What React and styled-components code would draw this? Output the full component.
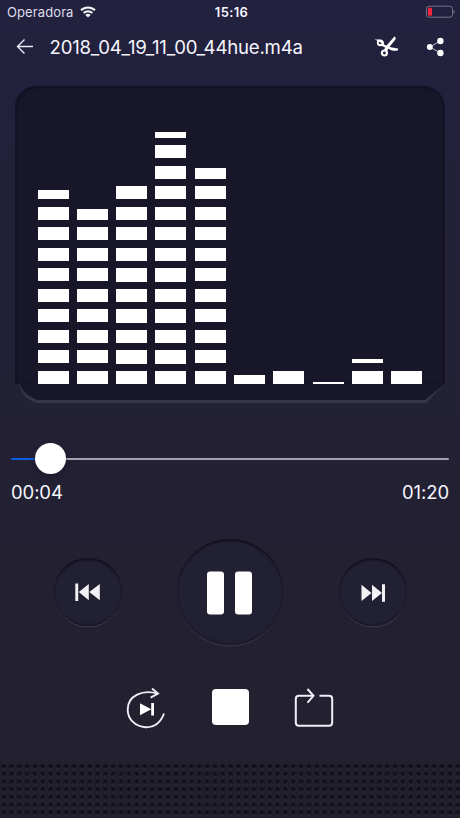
import styled, { createGlobalStyle } from "styled-components"

const GlobalStyle = createGlobalStyle`
    * {
        box-sizing: border-box;
    }
    body {
        margin: 0;
        background: #23202e;
    }
    button {
        border: none;
        padding: 0;
        background: none;
        color: inherit;
        cursor: pointer;
    }
    svg {
        display: block;
        overflow: visible;
    }
`;
const Screen = styled.div`
    display: flex;
    flex-direction: column;
    width: 460px;
    height: 818px;
    overflow: hidden;
    color: #f5f5fc;
    font-family: Inter, "Liberation Sans", sans-serif;
    background: linear-gradient(180deg, #22213f 0, #232139 200px, #232136 400px, #232031 600px, #23212e 818px);
`;
const StatusBar = styled.div`
    display: grid;
    grid-template-columns: 1fr auto 1fr;
    align-items: center;
    height: 24px;
    padding: 0 5px 0 7px;
    font-size: 13px;
`;
const Carrier = styled.div`
    display: flex;
    align-items: center;
    gap: 6px;
    letter-spacing: 0.1px;
    color: #dddcea;
`;
const Clock = styled.div`
    padding-left: 1px;
    font-weight: 600;
    letter-spacing: 0.35px;
`;
const BatterySlot = styled.div`
    display: flex;
    justify-content: flex-end;
`;
const Header = styled.div`
    display: flex;
    align-items: center;
    height: 46px;
    padding: 0 16px;
`;
const FileName = styled.div`
    flex: 1;
    margin-left: 15.5px;
    font-size: 18.6px;
    line-height: 24px;
    letter-spacing: -0.2px;
    white-space: nowrap;
`;
const HeaderIcons = styled.div`
    display: flex;
    align-items: center;
    gap: 28px;
`;
const Panel = styled.div`
    margin: 16px 15px 0;
`;
const PanelBody = styled.div`
    display: flex;
    align-items: flex-end;
    height: 298px;
    gap: 8.3px;
    padding: 0 22.5px;
    border-radius: 22px 22px 0 0;
    background: #181729;
    box-shadow: inset 0 2px 2px #131125, inset 2px 0 2px #151326, inset -2px 0 2px #151326, 1px 0 1px #29273c;
`;
const Bar = styled.div`
    width: 31px;
    flex: none;
    height: ${(props) => props.$height}px;
    background: repeating-linear-gradient(to top, #fff 0, #fff 13.3px, transparent 13.3px, transparent 20.5px);
`;
const PanelFoot = styled.div`
    height: 19px;
    background: linear-gradient(180deg, #272539, #38364b 14px);
    clip-path: path("M0 0H430L411 19H22C13 16 6 11 4 1L0 0Z");
`;
const PanelFootInner = styled.div`
    height: 17px;
    background: #181729;
    clip-path: path("M0 0H429L410 16H22C14 13 8 8 5 0Z");
`;
const Seek = styled.div`
    margin: 39px 11px 0;
`;
const Track = styled.div`
    display: flex;
    align-items: center;
    height: 32px;
`;
const TrackLine = styled.div`
    height: 2px;
    margin-top: 2px;
    border-radius: 1px;
    background: ${(props) => (props.$played ? "#0b5fe0" : "#a4a2ae")};
    width: ${(props) => (props.$played ? "24px" : "auto")};
    flex: ${(props) => (props.$played ? "none" : 1)};
`;
const Thumb = styled.div`
    width: 31px;
    height: 31px;
    flex: none;
    border-radius: 50%;
    background: #fff;
    box-shadow: 0 3px 8px rgba(0, 0, 0, 0.25);
`;
const Times = styled.div`
    display: flex;
    justify-content: space-between;
    margin-top: 6px;
    font-size: 18.5px;
    line-height: 24px;
    letter-spacing: -0.1px;
`;
const Controls = styled.div`
    display: flex;
    align-items: center;
    justify-content: space-between;
    height: 106px;
    margin-top: 35px;
    padding: 0 53.4px 0 53.6px;
`;
const RoundButton = styled.button`
    display: flex;
    align-items: center;
    justify-content: center;
    width: ${(props) => props.$size}px;
    height: ${(props) => props.$size}px;
    border-radius: 50%;
    background: #222133;
    box-shadow: inset 0 3px 2px -1px #12101f, inset 0 0 2px #171525, inset 0 -2px 2px -1px #1a1828, 0 2px 1px -0.5px #383545;
`;
const Modes = styled.div`
    display: flex;
    align-items: center;
    justify-content: space-between;
    height: 44px;
    margin-top: 41px;
    padding: 0 126px;
`;
const StopSquare = styled.div`
    width: 37px;
    height: 36px;
    margin-bottom: 2px;
    border-radius: 4px;
    background: #fff;
`;
const Grille = styled.div`
    height: 54px;
    margin-top: auto;
    background-color: #211f2c;
    background-image:
        radial-gradient(ellipse 3px 2.4px at 3.6px 2px, #0e0c19 35%, transparent 100%),
        radial-gradient(ellipse 2.6px 2px at 3.6px 5px, #292734, transparent);
    background-size: 7.84px 7.72px;
`;

const WifiIcon = () => (
    <svg width="16" height="12" viewBox="0 0 16 12" fill="none" stroke="#f5f5fc" strokeWidth="2">
        <path d="M1 4.3C4.9 .4 11.1 .4 15 4.3M3.6 7C6.1 4.6 9.9 4.6 12.4 7" />
        <path d="M5.4 8.9C6.9 7.5 9.1 7.5 10.6 8.9L8 11.5Z" fill="#f5f5fc" stroke="none" />
    </svg>
)
const BatteryIcon = () => (
    <svg width="29" height="12" viewBox="0 0 29 12">
        <rect x=".5" y=".2" width="26" height="11" rx="2.5" fill="none" stroke="#747184" />
        <path d="M27.5 3.7V7.7C29 7.1 29 4.3 27.5 3.7Z" fill="#747184" />
        <rect x="2" y="1.7" width="4" height="8" rx="1" fill="#f0263f" />
    </svg>
)
const BackIcon = () => (
    <svg width="18" height="16" viewBox="0 0 18 16" fill="none" stroke="#e9e8f4" strokeWidth="1.4">
        <path d="M17 7.5H1.5M8.5 .5L1.5 7.5L8.5 14.5" />
    </svg>
)
const ScissorsIcon = () => (
    <svg width="24" height="22" viewBox="0 0 24 22" fill="#fff">
        <circle cx="5.2" cy="6.8" r="2.4" fill="none" stroke="#fff" strokeWidth="2" />
        <circle cx="9.4" cy="17" r="2.5" fill="none" stroke="#fff" strokeWidth="2.2" />
        <path d="M-.6 3.5L4.4 3.6L8.8 5.8L8.8 8.6L11.6 9.6L19.4 .4C20.8 .8 21 2.2 20.4 3.4L14.4 11.1L22.8 12.6C23.7 13.4 23.1 14.4 22 14.7C18.3 15.2 15.8 14.2 13.3 12.8L11.9 15.8L9 14.4L10.1 11.6L6.5 9.7L7.4 7.4L3.6 5.2Z" />
    </svg>
)
const ShareIcon = () => (
    <svg width="17" height="18" viewBox="0 0 17 18" fill="#fff">
        <path d="M13.4 3L2.8 9L13.4 15" fill="none" stroke="#bdbcca" strokeWidth="1" />
        <circle cx="2.8" cy="9" r="3" />
        <circle cx="13.4" cy="3" r="3.2" />
        <circle cx="13.4" cy="15" r="3.2" />
    </svg>
)
const PrevIcon = () => (
    <svg width="26" height="18" viewBox="0 0 26 18" fill="#f2f2f6">
        <path d="M.3 .5H3.2V18H.3ZM13.8 1V17.2L3.8 9.1ZM24.8 1V17.2L14.3 9.1Z" />
    </svg>
)
const NextIcon = () => (
    <svg width="26" height="18" viewBox="0 0 26 18" fill="#f2f2f6">
        <path d="M1.5 1.8V18L11.5 9.9ZM12 1.8V18L22 9.9ZM22 1.2H25V18.7H22Z" />
    </svg>
)
const PauseIcon = () => (
    <svg width="46" height="43" viewBox="0 0 46 43" fill="#fff">
        <rect x="0" y=".4" width="17" height="43" rx="3.2" />
        <rect x="28" y=".4" width="17" height="43" rx="3.2" />
    </svg>
)
const PlayNextIcon = () => (
    <svg width="40" height="42" viewBox="0 0 40 42" fill="none" stroke="#f0eff8" strokeWidth="1.9">
        <path d="M38 26.5C34 37.5 26 40.4 19.5 40.2C9 39.6 1.7 32 1.7 22.5C1.7 8.5 17 2.2 31.5 6.6" />
        <path d="M26 1.5L32 6.6L24.6 10.6" />
        <path d="M14 16.2L25.2 22.2L14 28.2ZM25.2 15.9H28V28.5H25.2Z" fill="#fff" stroke="none" />
    </svg>
)
const RepeatIcon = () => (
    <svg width="40" height="42" viewBox="0 0 40 42" fill="none" stroke="#f0eff8" strokeWidth="2">
        <path d="M19 8.8H5Q1.8 8.8 1.8 12V35.5Q1.8 38.7 5 38.7H35Q38.2 38.7 38.2 35.5V12Q38.2 8.8 35 8.8H25.5" />
        <path d="M13.5 2L19.5 8.8L13.5 15.6" />
    </svg>
)

const levels = [193.7, 174.7, 197.7, 251.7, 215.7, 8.7, 13.3, 2.3, 24.7, 13.3]

const App = () => {
    return (
        <Screen>
            <GlobalStyle />
            <StatusBar>
                <Carrier>
                    Operadora
                    <WifiIcon />
                </Carrier>
                <Clock>15:16</Clock>
                <BatterySlot>
                    <BatteryIcon />
                </BatterySlot>
            </StatusBar>
            <Header>
                <button aria-label="Back"><BackIcon /></button>
                <FileName>2018_04_19_11_00_44hue.m4a</FileName>
                <HeaderIcons>
                    <button aria-label="Trim"><ScissorsIcon /></button>
                    <button aria-label="Share"><ShareIcon /></button>
                </HeaderIcons>
            </Header>
            <Panel>
                <PanelBody>
                    {levels.map((level, index) => (
                        <Bar key={index} $height={level} />
                    ))}
                </PanelBody>
                <PanelFoot>
                    <PanelFootInner />
                </PanelFoot>
            </Panel>
            <Seek>
                <Track>
                    <TrackLine $played />
                    <Thumb />
                    <TrackLine />
                </Track>
                <Times>
                    <span>00:04</span>
                    <span>01:20</span>
                </Times>
            </Seek>
            <Controls>
                <RoundButton $size={68} aria-label="Previous"><PrevIcon /></RoundButton>
                <RoundButton $size={106} aria-label="Pause"><PauseIcon /></RoundButton>
                <RoundButton $size={68} aria-label="Next"><NextIcon /></RoundButton>
            </Controls>
            <Modes>
                <button aria-label="Play next"><PlayNextIcon /></button>
                <button aria-label="Stop"><StopSquare /></button>
                <button aria-label="Repeat"><RepeatIcon /></button>
            </Modes>
            <Grille />
        </Screen>
    )
}
export default App
